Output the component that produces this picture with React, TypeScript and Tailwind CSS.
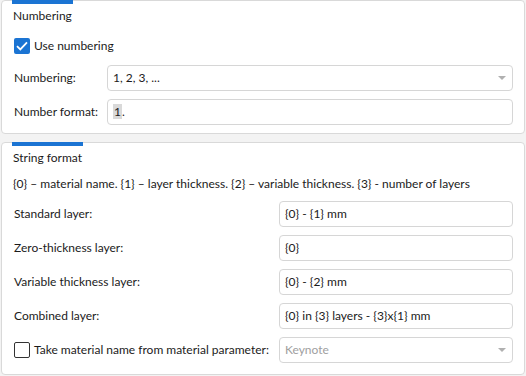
import React from "react";

const font = { fontFamily: "'Segoe UI', Lato, 'Noto Sans', sans-serif" };

const Caret = () => (
  <svg width="8" height="4" viewBox="0 0 8 4" className="shrink-0">
    <path d="M0 0 L8 0 L4 4 Z" fill="#b0b0b0" />
  </svg>
);

const Field = ({ value, muted = false, select = false }: { value: React.ReactNode; muted?: boolean; select?: boolean }) => (
  <div className="flex h-[26px] w-full items-center rounded-[4px] border border-[#d6d6d6] bg-white pl-[5px] pr-[6px]">
    <span className={`flex-1 truncate ${muted ? "text-[#a0a0a0]" : "text-[#1b1b1b]"}`}>{value}</span>
    {select && <Caret />}
  </div>
);

const Panel = ({ title, tabW, children, className }: { title: string; tabW: string; children: React.ReactNode; className?: string }) => (
  <div className={`relative rounded-[4px] border border-[#d9d9d9] bg-white px-[11px] ${className ?? ""}`}>
    <div className={`absolute left-[10px] top-[-1px] h-[4px] bg-[#1b74d3] ${tabW}`} />
    <div className="pt-[7px] leading-[16px]">{title}</div>
    {children}
  </div>
);

export default function App() {
  return (
    <div className="flex h-[376px] w-[526px] flex-col gap-[8px] bg-[#f3f3f3] px-[1px] pb-[1px] text-[12px] text-[#1b1b1b]" style={font}>
      <Panel title="Numbering" tabW="w-[61px]" className="h-[134px]">
        <div className="mt-[13px] flex items-center gap-[4px] pl-[1px]">
          <div className="flex h-[16px] w-[16px] items-center justify-center rounded-[2px] bg-[#1b74d3]">
            <svg width="12" height="10" viewBox="0 0 12 10">
              <path d="M1 5.2 L4.3 8.4 L11 1.4" stroke="white" strokeWidth="1.8" fill="none" />
            </svg>
          </div>
          <span>Use numbering</span>
        </div>
        <div className="mt-[10px] flex flex-col gap-[8px]">
          <div className="flex items-center">
            <span className="w-[94px] shrink-0 pl-[1px]">Numbering:</span>
            <Field value="1, 2, 3, ..." select />
          </div>
          <div className="flex items-center">
            <span className="w-[94px] shrink-0 pl-[1px]">Number format:</span>
            <Field value={<><span className="bg-[#d9d9d9] px-[1px]">1</span>.</>} />
          </div>
        </div>
      </Panel>
      <Panel title="String format" tabW="w-[71px]" className="flex-1">
        <div className="mt-[10px] leading-[16px]">
          {"{0} – material name. {1} – layer thickness. {2} – variable thickness. {3} - number of layers"}
        </div>
        <div className="mt-[9px] flex flex-col gap-[8px]">
          {[
            ["Standard layer:", "{0} - {1} mm"],
            ["Zero-thickness layer:", "{0}"],
            ["Variable thickness layer:", "{0} - {2} mm"],
            ["Combined layer:", "{0} in {3} layers - {3}x{1} mm"],
          ].map(([l, v]) => (
            <div key={l} className="flex items-center">
              <span className="w-[266px] shrink-0 pl-[1px]">{l}</span>
              <Field value={v} />
            </div>
          ))}
          <div className="flex items-center">
            <div className="flex w-[266px] shrink-0 items-center gap-[4px] whitespace-nowrap pl-[1px]">
              <div className="h-[16px] w-[16px] shrink-0 rounded-[2px] border border-[#333] bg-white" />
              <span>Take material name from material parameter:</span>
            </div>
            <Field value="Keynote" muted select />
          </div>
        </div>
      </Panel>
    </div>
  );
}
